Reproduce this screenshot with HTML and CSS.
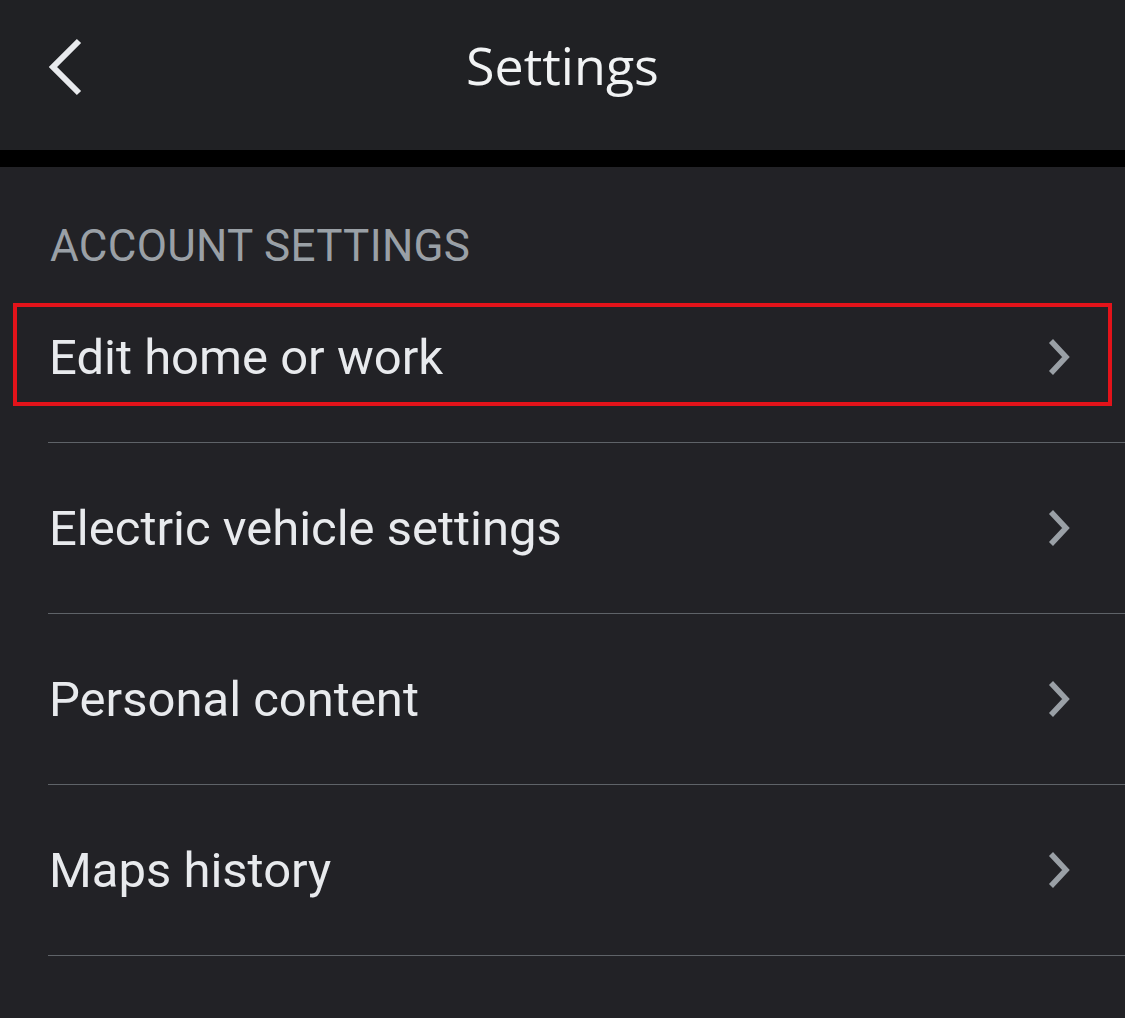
FILE: index.html
```html
<!DOCTYPE html>
<html lang="en">
<head>
    <meta charset="UTF-8">
    <meta name="viewport" content="width=device-width, initial-scale=1.0">
    <title>Settings</title>
    <link rel="stylesheet" href="styles.css">
</head>
<body>
    <div class="topbar">
        <button class="back" aria-label="Back">
            <svg width="40" height="60" viewBox="0 0 40 60">
                <path d="M35 4 L9 30 L35 56" fill="none" stroke="#e8eaed" stroke-width="6"/>
            </svg>
        </button>
        <h1>Settings</h1>
    </div>
    <div class="band"></div>

    <div class="content">
        <h2>ACCOUNT SETTINGS</h2>
        <ul class="list">
            <li class="row selected">
                <span>Edit home or work</span>
                <svg class="chev" width="26" height="40" viewBox="0 0 26 40"><path d="M5 4 L20 20 L5 36" fill="none" stroke="#9aa0a6" stroke-width="5.5"/></svg>
                <div class="highlight"></div>
            </li>
            <li class="row">
                <span>Electric vehicle settings</span>
                <svg class="chev" width="26" height="40" viewBox="0 0 26 40"><path d="M5 4 L20 20 L5 36" fill="none" stroke="#9aa0a6" stroke-width="5.5"/></svg>
            </li>
            <li class="row">
                <span>Personal content</span>
                <svg class="chev" width="26" height="40" viewBox="0 0 26 40"><path d="M5 4 L20 20 L5 36" fill="none" stroke="#9aa0a6" stroke-width="5.5"/></svg>
            </li>
            <li class="row">
                <span>Maps history</span>
                <svg class="chev" width="26" height="40" viewBox="0 0 26 40"><path d="M5 4 L20 20 L5 36" fill="none" stroke="#9aa0a6" stroke-width="5.5"/></svg>
            </li>
        </ul>
    </div>
</body>
</html>
```

FILE: styles.css
```css
body {
    margin: 0;
    background-color: #222226;
    font-family: Roboto, "Liberation Sans", sans-serif;
    color: #e8eaed;
    overflow: hidden;
}
.topbar {
    height: 150px;
    background-color: #202124;
    display: flex;
    align-items: center;
    justify-content: center;
    position: relative;
}
.back {
    position: absolute;
    left: 44px;
    top: 37px;
    background: none;
    border: none;
    padding: 0;
    cursor: pointer;
}
.back svg {
    display: block;
}
.topbar h1 {
    margin: 0 0 22px 0;
    font-family: "Open Sans", Roboto, sans-serif;
    font-weight: 400;
    font-size: 52px;
    color: #f1f3f4;
}
.band {
    height: 17px;
    background-color: #000;
}
.content h2 {
    margin: 0;
    height: 105px;
    padding-left: 50px;
    box-sizing: border-box;
    padding-top: 55px;
    font-size: 44px;
    font-weight: 400;
    line-height: 48px;
    letter-spacing: 0.3px;
    color: #9aa0a6;
}
.list {
    list-style: none;
    margin: 0;
    padding: 0;
}
.row {
    position: relative;
    height: 170px;
    margin-left: 48px;
    padding-right: 53px;
    border-bottom: 1px solid #5f6368;
    display: flex;
    align-items: center;
    justify-content: space-between;
    font-size: 49px;
}
.row span {
    padding-left: 1px;
}
.highlight {
    position: absolute;
    left: -35px;
    top: 31px;
    width: 1099px;
    height: 103px;
    box-sizing: border-box;
    border: 4px solid #e3131a;
}
```
